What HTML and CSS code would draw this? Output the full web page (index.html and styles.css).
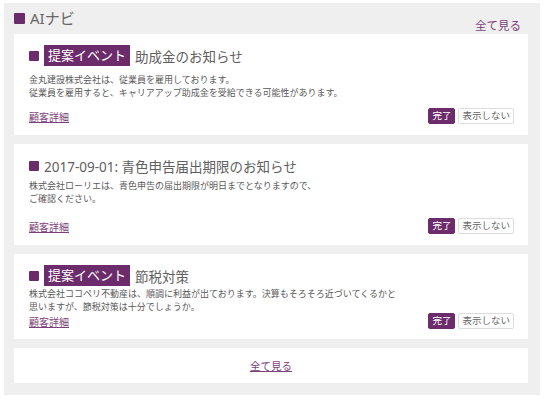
FILE: index.html
```html
<!DOCTYPE html>
<html lang="ja">
<head>
    <meta charset="UTF-8">
    <meta name="viewport" content="width=device-width, initial-scale=1.0">
    <title>AIナビ</title>
    <link rel="stylesheet" href="styles.css">
</head>
<body>
    <section class="ai-panel">
        <div class="panel-head">
            <h2 class="panel-title"><span class="mark"></span>AIナビ</h2>
            <a href="#" class="more-link">全て見る</a>
        </div>

        <div class="ai-card">
            <div class="card-title">
                <span class="mark"></span>
                <span class="badge">提案イベント</span>
                <span>助成金のお知らせ</span>
            </div>
            <p class="card-desc spaced">金丸建設株式会社は、従業員を雇用しております。<br>従業員を雇用すると、キャリアアップ助成金を受給できる可能性があります。</p>
            <div class="card-actions">
                <a href="#" class="detail-link">顧客詳細</a>
                <div class="btns">
                    <button class="btn btn-done">完了</button>
                    <button class="btn btn-hide">表示しない</button>
                </div>
            </div>
        </div>

        <div class="ai-card">
            <div class="card-title">
                <span class="mark"></span>
                <span>2017-09-01: 青色申告届出期限のお知らせ</span>
            </div>
            <p class="card-desc">株式会社ローリエは、青色申告の届出期限が明日までとなりますので、<br>ご確認ください。</p>
            <div class="card-actions">
                <a href="#" class="detail-link">顧客詳細</a>
                <div class="btns">
                    <button class="btn btn-done">完了</button>
                    <button class="btn btn-hide">表示しない</button>
                </div>
            </div>
        </div>

        <div class="ai-card compact">
            <div class="card-title">
                <span class="mark"></span>
                <span class="badge">提案イベント</span>
                <span>節税対策</span>
            </div>
            <p class="card-desc">株式会社ココペリ不動産は、順調に利益が出ております。決算もそろそろ近づいてくるかと<br>思いますが、節税対策は十分でしょうか。</p>
            <div class="card-actions">
                <a href="#" class="detail-link">顧客詳細</a>
                <div class="btns">
                    <button class="btn btn-done">完了</button>
                    <button class="btn btn-hide">表示しない</button>
                </div>
            </div>
        </div>

        <div class="ai-card card-footer">
            <a href="#" class="detail-link">全て見る</a>
        </div>
    </section>
</body>
</html>
```

FILE: styles.css
```css
body {
    margin: 0;
    background-color: #fff;
    font-family: "Noto Sans", "Noto Sans CJK JP", sans-serif;
    color: #555;
}

.ai-panel {
    margin: 3px 5px 0 4px;
    padding: 6px 12px 12px 10px;
    background-color: #efefef;
    display: flex;
    flex-direction: column;
    gap: 9px;
}

.panel-head {
    display: flex;
    justify-content: space-between;
    align-items: flex-end;
    height: 25px;
    margin-bottom: -9px;
}

.panel-title {
    display: flex;
    align-items: center;
    gap: 5px;
    align-self: flex-start;
    margin: 0;
    font-size: 15px;
    font-weight: normal;
    line-height: 18px;
    color: #666;
}

.mark {
    display: inline-block;
    width: 10px;
    height: 10px;
    background-color: #6c2c6b;
    border-radius: 1px;
    flex-shrink: 0;
}

.panel-title .mark {
    width: 11px;
    height: 11px;
}

.more-link {
    font-size: 11.5px;
    line-height: 16px;
    padding-right: 7px;
    color: #7b3f7a;
    text-decoration: none;
}

.ai-card {
    box-sizing: border-box;
    min-height: 101px;
    padding: 11px 14px 11px 15px;
    background-color: #fff;
    display: flex;
    flex-direction: column;
}

.ai-card.compact {
    min-height: 0;
    padding-bottom: 10px;
}

.card-title {
    display: flex;
    align-items: center;
    gap: 5px;
    min-height: 21px;
    font-size: 13.5px;
    color: #606060;
}

.badge {
    background-color: #6c2c6b;
    color: #fff;
    font-size: 13px;
    line-height: 21px;
    padding: 0 4px;
}

.card-desc {
    margin: 3px 0 0;
    font-size: 9px;
    line-height: 13px;
    color: #5a5a5a;
}

.card-desc.spaced {
    margin-top: 7px;
}

.compact .card-desc {
    margin-top: 1px;
}

.card-actions {
    display: flex;
    justify-content: space-between;
    align-items: center;
    margin-top: auto;
}

.detail-link {
    font-size: 10px;
    color: #7b3f7a;
}

.btns {
    display: flex;
    gap: 3px;
}

.btn {
    height: 16px;
    padding: 0 3px;
    font-family: inherit;
    font-size: 9.5px;
    line-height: 14px;
    border-radius: 2px;
    border: 1px solid #ddd;
    cursor: pointer;
}

.btn-done {
    background-color: #6c2c6b;
    border-color: #6c2c6b;
    color: #fff;
}

.btn-hide {
    background-color: #fff;
    color: #666;
}

.card-footer {
    min-height: 0;
    height: 35px;
    padding: 0;
    align-items: center;
    justify-content: center;
}

.card-footer .detail-link {
    font-size: 10.5px;
}
```
